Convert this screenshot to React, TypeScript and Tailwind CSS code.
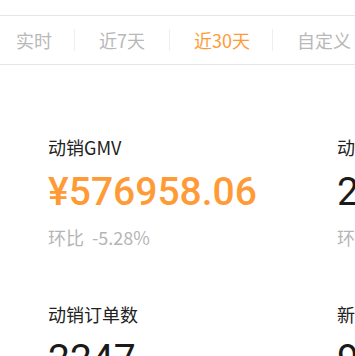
const tabs = ["实时", "近7天", "近30天", "自定义"];

const stats = [
  { title: "动销GMV", value: "¥576958.06", change: "-5.28%", highlight: true },
  { title: "动销商品数", value: "286", change: "+3.61%" },
  { title: "动销订单数", value: "2247", change: "-2.14%" },
  { title: "新增客户数", value: "96", change: "+1.05%" },
];

const StatCard = ({
  title,
  value,
  change,
  highlight,
}: {
  title: string;
  value: string;
  change: string;
  highlight?: boolean;
}) => {
  return (
    <div className="h-[167px] w-[289px] shrink-0 pl-12">
      {/* Title */}
      <div className="text-[18px] leading-[26px] text-[#222]">{title}</div>

      {/* Value */}
      <div
        className={
          highlight
            ? "mt-3 font-['Roboto',sans-serif] text-[39px] leading-[40px] font-medium text-[#ff9b37]"
            : "mt-3 font-['Roboto',sans-serif] text-[39px] leading-[40px] font-normal text-[#1a1a1a]"
        }
      >
        {value}
      </div>

      {/* Change */}
      <div className="mt-3 flex text-[18px] leading-[26px] text-[#b5b5b5]">
        <span>环比</span>
        <span className="ml-2">{change}</span>
      </div>
    </div>
  );
};

export default function App() {
  return (
    <div className="h-[356px] w-[355px] overflow-hidden bg-white font-['Noto_Sans_CJK_SC','Noto_Sans',sans-serif]">
      <div className="h-[15px]" />

      {/* Tabs */}
      <div className="flex h-[50px] items-center whitespace-nowrap border-y border-[#e6e6e6] pl-4">
        {tabs.map((tab, i) => (
          <div key={tab} className="flex items-center">
            {i > 0 && <div className="h-[22px] w-px shrink-0 bg-[#eeeeee]" />}
            <div
              className={
                (i === 0 ? "pr-[22px]" : i === 2 ? "pl-6 pr-[22px]" : "px-6") +
                (i === 2 ? " text-[#ff9b37]" : " text-[#b8b8b8]") +
                " text-[18px] leading-[26px]"
              }
            >
              {tab}
            </div>
          </div>
        ))}
      </div>

      {/* Stats */}
      <div className="grid w-max grid-cols-[289px_289px] pt-[69px]">
        {stats.map((s) => (
          <StatCard key={s.title} {...s} />
        ))}
      </div>
    </div>
  );
}
